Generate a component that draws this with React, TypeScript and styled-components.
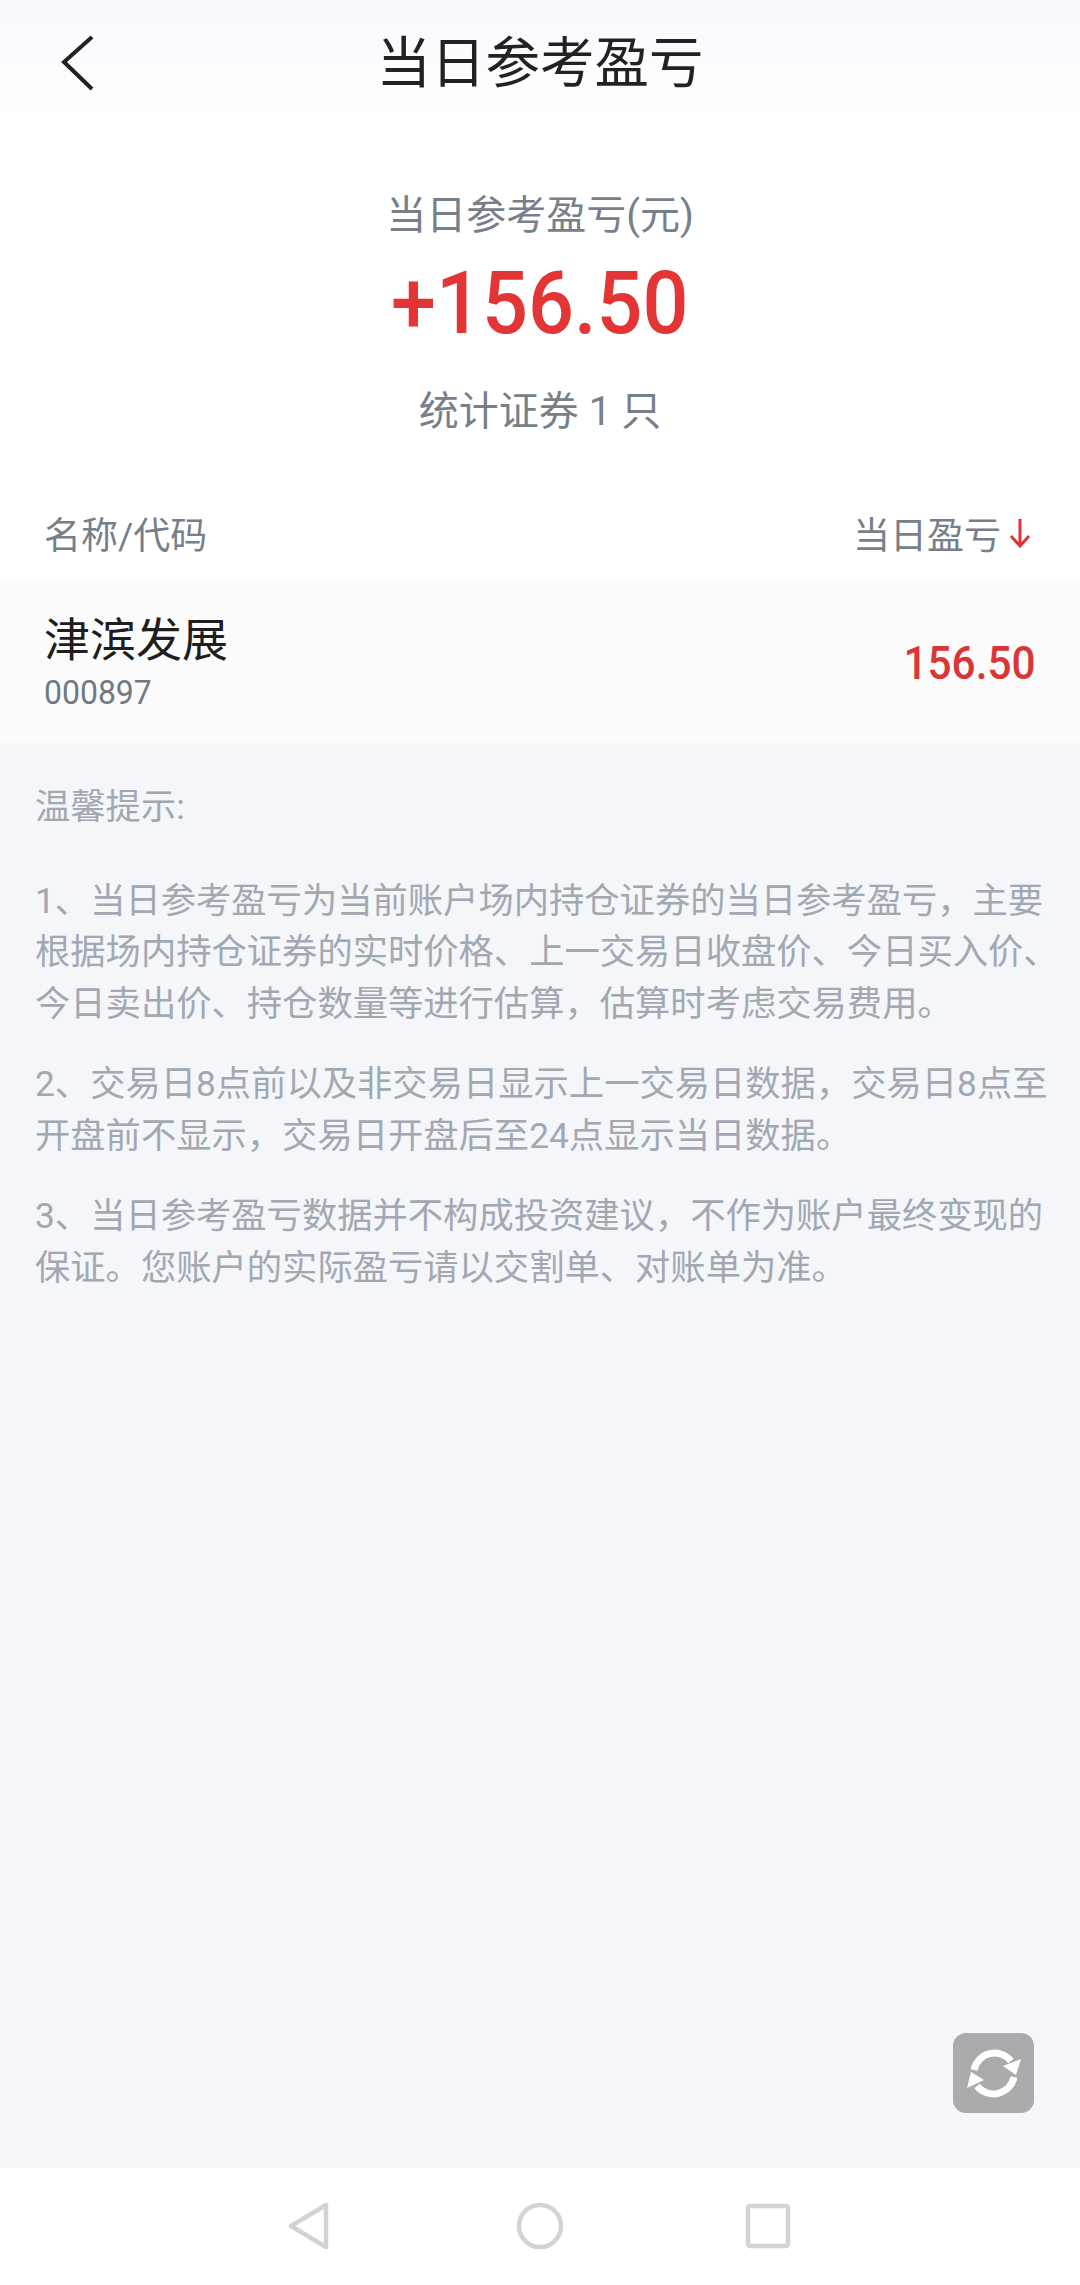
import React from "react";
import styled, { createGlobalStyle } from "styled-components";

const GlobalStyle = createGlobalStyle`
  html, body {
    margin: 0;
    padding: 0;
    background: #ffffff;
  }
  * {
    box-sizing: border-box;
  }
`;

const Page = styled.div`
  width: 1080px;
  height: 2285px;
  display: flex;
  flex-direction: column;
  background: #ffffff;
  font-family: Roboto, "Noto Sans CJK SC", sans-serif;
  overflow: hidden;
`;

const TopBar = styled.header`
  height: 125px;
  flex: none;
  display: flex;
  align-items: center;
  justify-content: center;
  position: relative;
  background: linear-gradient(#f7f9fd, #ffffff);
`;

const BackIcon = styled.svg`
  position: absolute;
  left: 58px;
  top: 30px;
  width: 40px;
  height: 66px;
`;

const Title = styled.h1`
  margin: 0;
  font-size: 54.5px;
  line-height: 70px;
  font-weight: 400;
  color: #222222;
`;

const Summary = styled.section`
  height: 373px;
  flex: none;
  display: flex;
  flex-direction: column;
  align-items: center;
  padding-top: 63px;
`;

const SummaryLabel = styled.div`
  font-size: 40px;
  line-height: 56px;
  color: #767f8a;
`;

const BigAmount = styled.div`
  margin-top: 11px;
  font-size: 88px;
  line-height: 96px;
  font-weight: 500;
  transform: scaleX(0.92);
  color: #e33535;
`;

const SummaryCount = styled.div`
  margin-top: 33px;
  font-size: 40px;
  line-height: 56px;
  color: #767f8a;
`;

const ColumnHead = styled.div`
  height: 84px;
  flex: none;
  display: flex;
  align-items: center;
  justify-content: space-between;
  padding: 0 49px 14px 44px;
  font-size: 37px;
  color: #767f8a;
`;

const SortLabel = styled.div`
  display: flex;
  align-items: center;
  gap: 8px;
`;

const SortArrow = styled.svg`
  width: 22px;
  height: 30px;
`;

const StockRow = styled.div`
  height: 161px;
  flex: none;
  display: flex;
  align-items: center;
  justify-content: space-between;
  padding: 0 44px;
  background: #fbfbfc;
`;

const StockInfo = styled.div`
  display: flex;
  flex-direction: column;
  padding-bottom: 6px;
`;

const StockName = styled.div`
  font-size: 46px;
  line-height: 62px;
  color: #1e1e1e;
`;

const StockCode = styled.div`
  margin-top: 2px;
  font-size: 34px;
  line-height: 38px;
  transform: scaleX(0.94);
  transform-origin: left center;
  color: #6f7986;
`;

const StockValue = styled.div`
  font-size: 46px;
  font-weight: 500;
  transform: scaleX(0.92);
  transform-origin: right center;
  color: #d93636;
`;

const Notes = styled.section`
  flex: 1;
  position: relative;
  padding: 39px 15px 0 35px;
  background: #f4f6fa;
  font-size: 35.3px;
  line-height: 51.5px;
  color: #a1a8b2;
`;

const NoteTitle = styled.p`
  margin: 0 0 42px;
`;

const NoteText = styled.p`
  margin: 0 0 29px;
`;

const RefreshButton = styled.div`
  position: absolute;
  left: 953px;
  bottom: 55px;
  width: 81px;
  height: 80px;
  display: flex;
  border-radius: 13px;
  background: #aaabad;
`;

const RefreshIcon = styled.svg`
  width: 81px;
  height: 80px;
`;

const NavBar = styled.nav`
  height: 117px;
  flex: none;
  display: flex;
  align-items: center;
  justify-content: center;
  background: #ffffff;
  padding-bottom: 1px;
`;

const NavIcon = styled.svg`
  width: 60px;
  height: 60px;
  margin: 0 84px;
  fill: none;
  stroke: #d3d3d3;
  stroke-width: 4.5;
  stroke-linejoin: round;
`;

const App: React.FC = () => (
  <Page>
    <GlobalStyle />
    <TopBar>
      <BackIcon viewBox="0 0 40 66" fill="none">
        <path d="M34 7 L6 32 L34 59" stroke="#222222" strokeWidth="4" />
      </BackIcon>
      <Title>当日参考盈亏</Title>
    </TopBar>

    <Summary>
      <SummaryLabel>当日参考盈亏(元)</SummaryLabel>
      <BigAmount>+156.50</BigAmount>
      <SummaryCount>统计证券 1 只</SummaryCount>
    </Summary>

    <ColumnHead>
      <div>名称/代码</div>
      <SortLabel>
        当日盈亏
        <SortArrow viewBox="0 0 22 30" fill="none" stroke="#dd3333" strokeWidth="3">
          <path d="M11 1 V28" />
          <path d="M2 18 L11 28 L20 18" />
        </SortArrow>
      </SortLabel>
    </ColumnHead>

    <StockRow>
      <StockInfo>
        <StockName>津滨发展</StockName>
        <StockCode>000897</StockCode>
      </StockInfo>
      <StockValue>156.50</StockValue>
    </StockRow>

    <Notes>
      <NoteTitle>温馨提示:</NoteTitle>
      <NoteText>
        1、当日参考盈亏为当前账户场内持仓证券的当日参考盈亏，主要根据场内持仓证券的实时价格、上一交易日收盘价、今日买入价、今日卖出价、持仓数量等进行估算，估算时考虑交易费用。
      </NoteText>
      <NoteText>
        2、交易日8点前以及非交易日显示上一交易日数据，交易日8点至开盘前不显示，交易日开盘后至24点显示当日数据。
      </NoteText>
      <NoteText>
        3、当日参考盈亏数据并不构成投资建议，不作为账户最终变现的保证。您账户的实际盈亏请以交割单、对账单为准。
      </NoteText>
      <RefreshButton>
        <RefreshIcon viewBox="0 0 81 80" fill="none">
          <path d="M21 37 A21 21 0 0 1 58 28" stroke="#ffffff" strokeWidth="7" />
          <path d="M63 42 L68 26 L50 33 Z" fill="#ffffff" />
          <path d="M61 44 A21 21 0 0 1 24 53" stroke="#ffffff" strokeWidth="7" />
          <path d="M18 39 L14 55 L31 47 Z" fill="#ffffff" />
        </RefreshIcon>
      </RefreshButton>
    </Notes>

    <NavBar>
      <NavIcon viewBox="0 0 60 60">
        <path d="M9 30 L44 9 V51 Z" />
      </NavIcon>
      <NavIcon viewBox="0 0 60 60">
        <circle cx="30" cy="30" r="21" />
      </NavIcon>
      <NavIcon viewBox="0 0 60 60">
        <rect x="10" y="10" width="40" height="40" rx="2" />
      </NavIcon>
    </NavBar>
  </Page>
);

export default App;
